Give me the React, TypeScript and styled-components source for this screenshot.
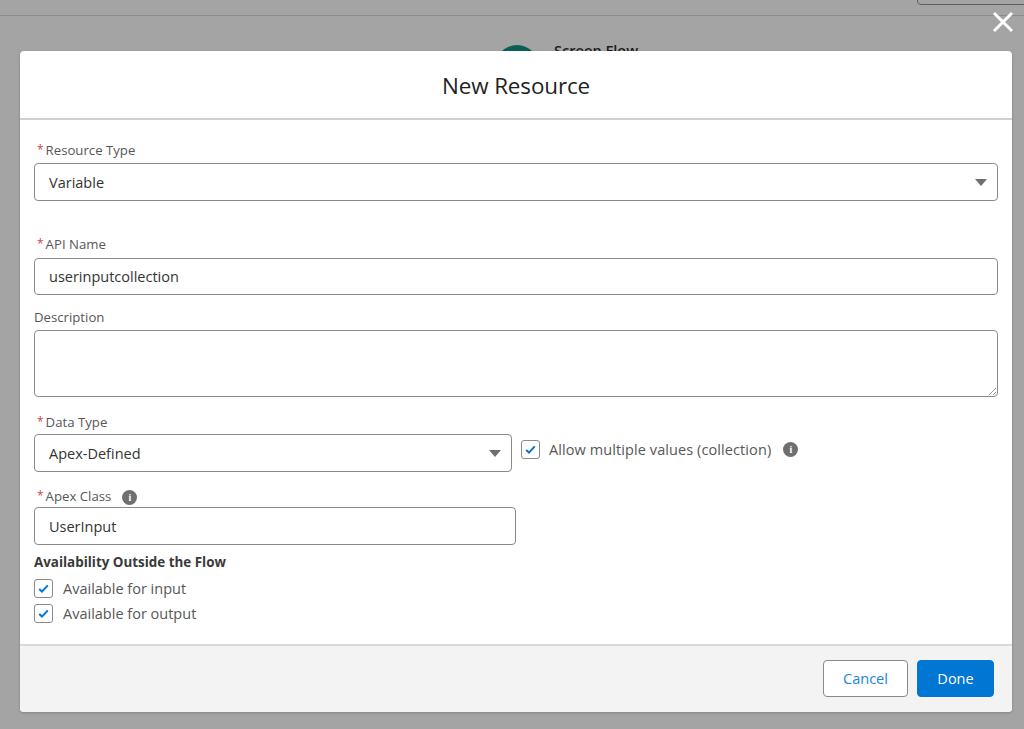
import React from "react";
import styled, { createGlobalStyle } from "styled-components";

const Global = createGlobalStyle`
  html, body { margin: 0; padding: 0; }
  body { font-family: "Open Sans", "Noto Sans", sans-serif; background: #a4a4a4; }
`;

const Page = styled.div`
  position: relative;
  width: 1024px;
  height: 729px;
  overflow: hidden;
  background: #a4a4a4;
  padding-top: 51px;
  box-sizing: border-box;
`;
const TopBar = styled.div`
  position: absolute;
  left: 0;
  top: 0;
  right: 0;
  height: 15px;
  border-bottom: 1px solid #8c8c8c;
`;
const TopButton = styled.div`
  position: absolute;
  left: 917px;
  top: -20px;
  width: 120px;
  height: 25px;
  box-sizing: border-box;
  border: 1px solid #5f5f5f;
  border-radius: 4px;
`;
const FlowBadge = styled.div`
  position: absolute;
  left: 495px;
  top: 45px;
  width: 44px;
  height: 44px;
  border-radius: 50%;
  background: #0b5f58;
`;
const FlowTitle = styled.div`
  position: absolute;
  left: 554px;
  top: 41px;
  font-size: 14.6px;
  font-weight: 600;
  line-height: 18px;
  color: #1c1c1c;
`;
const CloseButton = styled.div`
  position: absolute;
  left: 992px;
  top: 11px;
  width: 22px;
  height: 22px;
  color: #fff;
`;
const Modal = styled.div`
  position: relative;
  margin-left: 20px;
  width: 992px;
  height: 661px;
  background: #fff;
  border-radius: 4px;
  box-shadow: 0 1px 3px rgba(0, 0, 0, 0.2);
  display: flex;
  flex-direction: column;
  overflow: hidden;
`;
const Header = styled.div`
  height: 69px;
  flex: none;
  box-sizing: border-box;
  display: flex;
  align-items: center;
  justify-content: center;
  padding-top: 2px;
  border-bottom: 2px solid #d0d0d0;
  font-size: 22.4px;
  color: #1f1f1f;
  letter-spacing: -0.1px;
`;
const Body = styled.div`
  flex: 1;
  padding: 21px 14px 0;
  display: flex;
  flex-direction: column;
`;
const Label = styled.div<{ $top?: number; $bottom?: number; $plain?: boolean }>`
  font-size: 13.2px;
  line-height: 18px;
  color: #575757;
  display: flex;
  align-items: center;
  padding-left: ${(p) => (p.$plain ? 0 : 3)}px;
  margin-top: ${(p) => p.$top ?? 0}px;
  margin-bottom: ${(p) => p.$bottom ?? 4}px;
`;
const Star = styled.span`
  color: #c9474a;
  font-size: 12px;
  margin-right: 2px;
`;
const Control = styled.div<{ $width?: number; $height?: number }>`
  position: relative;
  box-sizing: border-box;
  width: ${(p) => (p.$width ? `${p.$width}px` : "100%")};
  height: ${(p) => p.$height ?? 37}px;
  flex: none;
  border: 1px solid #8a8a8a;
  border-radius: 4px;
  background: #fff;
  padding: 0 14px;
  display: flex;
  align-items: center;
  font-size: 14.5px;
  color: #333;
`;
const Caret = styled.span`
  position: absolute;
  right: 10px;
  top: 50%;
  margin-top: -3px;
  width: 0;
  height: 0;
  border-left: 6px solid transparent;
  border-right: 6px solid transparent;
  border-top: 7px solid #706e6b;
`;
const Grip = styled.svg`
  position: absolute;
  right: 0;
  bottom: 0;
`;
const DataRow = styled.div`
  display: flex;
  align-items: flex-start;
  gap: 9px;
`;
const CheckRow = styled.div<{ $top?: number; $track?: number }>`
  display: flex;
  align-items: center;
  height: 19px;
  margin-top: ${(p) => p.$top ?? 0}px;
  font-size: 14.5px;
  letter-spacing: ${(p) => p.$track ?? 0}px;
  color: #575757;
`;
const Box = styled.span<{ $gap?: number }>`
  width: 19px;
  height: 19px;
  box-sizing: border-box;
  border: 1px solid #8a8a8a;
  border-radius: 3px;
  margin-right: ${(p) => p.$gap ?? 10}px;
  display: flex;
  align-items: center;
  justify-content: center;
  flex: none;
`;
const InfoDot = styled.span<{ $left: number; $drop?: number }>`
  width: 15px;
  height: 15px;
  border-radius: 50%;
  background: #6f6f6f;
  color: #fff;
  font-size: 10px;
  font-weight: 700;
  line-height: 15px;
  letter-spacing: 0;
  text-align: center;
  margin-left: ${(p) => p.$left}px;
  margin-top: ${(p) => p.$drop ?? 0}px;
  font-family: "Liberation Serif", serif;
  flex: none;
`;
const Section = styled.div`
  font-size: 13.4px;
  font-weight: 700;
  line-height: 18px;
  color: #3a3a3a;
  margin-top: 8px;
`;
const Footer = styled.div`
  height: 68px;
  flex: none;
  box-sizing: border-box;
  border-top: 2px solid #d8d8d8;
  background: #f3f3f3;
  display: flex;
  align-items: flex-start;
  justify-content: flex-end;
  padding: 14px 18px 0 0;
  gap: 9px;
`;
const Button = styled.button<{ $primary?: boolean }>`
  height: 37px;
  width: ${(p) => (p.$primary ? 77 : 85)}px;
  border-radius: 4px;
  box-sizing: border-box;
  border: 1px solid ${(p) => (p.$primary ? "#0176d3" : "#8a8a8a")};
  background: ${(p) => (p.$primary ? "#0176d3" : "#fff")};
  color: ${(p) => (p.$primary ? "#fff" : "#1b84de")};
  font-family: inherit;
  font-size: 14.5px;
  padding: 0;
`;

const Check = () => (
  <svg width="13" height="13" viewBox="0 0 13 13" aria-hidden="true">
    <path d="M2.2 7 L5 9.6 L10.8 3.4" fill="none" stroke="#0176d3" strokeWidth="2" />
  </svg>
);

const Req = ({ children, top, bottom }: { children: React.ReactNode; top?: number; bottom?: number }) => (
  <Label $top={top} $bottom={bottom}>
    <Star>*</Star>
    {children}
  </Label>
);

export default function App() {
  return (
    <Page>
      <Global />
      <TopBar>
        <TopButton />
      </TopBar>
      <FlowBadge />
      <FlowTitle>Screen Flow</FlowTitle>
      <CloseButton>
        <svg width="22" height="22" viewBox="0 0 22 22" aria-hidden="true">
          <path d="M2 2 L20 20 M20 2 L2 20" stroke="currentColor" strokeWidth="3" fill="none" />
        </svg>
      </CloseButton>
      <Modal>
        <Header>New Resource</Header>
        <Body>
          <Req>Resource Type</Req>
          <Control $height={38}>
            Variable
            <Caret />
          </Control>
          <Req top={34} bottom={5}>
            API Name
          </Req>
          <Control>userinputcollection</Control>
          <Label $top={13} $plain>
            Description
          </Label>
          <Control $height={67}>
            <Grip width="10" height="10" viewBox="0 0 10 10" aria-hidden="true">
              <path d="M9 2 L2 9 M9 6 L6 9" stroke="#9a9a9a" strokeWidth="1" />
            </Grip>
          </Control>
          <Req top={16} bottom={3}>
            Data Type
          </Req>
          <DataRow>
            <Control $width={478} $height={38}>
              Apex-Defined
              <Caret />
            </Control>
            <CheckRow $top={6} $track={0.09}>
              <Box $gap={9}>
                <Check />
              </Box>
              Allow multiple values (collection)
              <InfoDot $left={12}>i</InfoDot>
            </CheckRow>
          </DataRow>
          <Label $top={14} $bottom={2}>
            <Star>*</Star>
            Apex Class
            <InfoDot $left={11} $drop={4}>
              i
            </InfoDot>
          </Label>
          <Control $width={482} $height={38}>
            UserInput
          </Control>
          <Section>Availability Outside the Flow</Section>
          <CheckRow $top={8}>
            <Box>
              <Check />
            </Box>
            Available for input
          </CheckRow>
          <CheckRow $top={6}>
            <Box>
              <Check />
            </Box>
            Available for output
          </CheckRow>
        </Body>
        <Footer>
          <Button>Cancel</Button>
          <Button $primary>Done</Button>
        </Footer>
      </Modal>
    </Page>
  );
}
